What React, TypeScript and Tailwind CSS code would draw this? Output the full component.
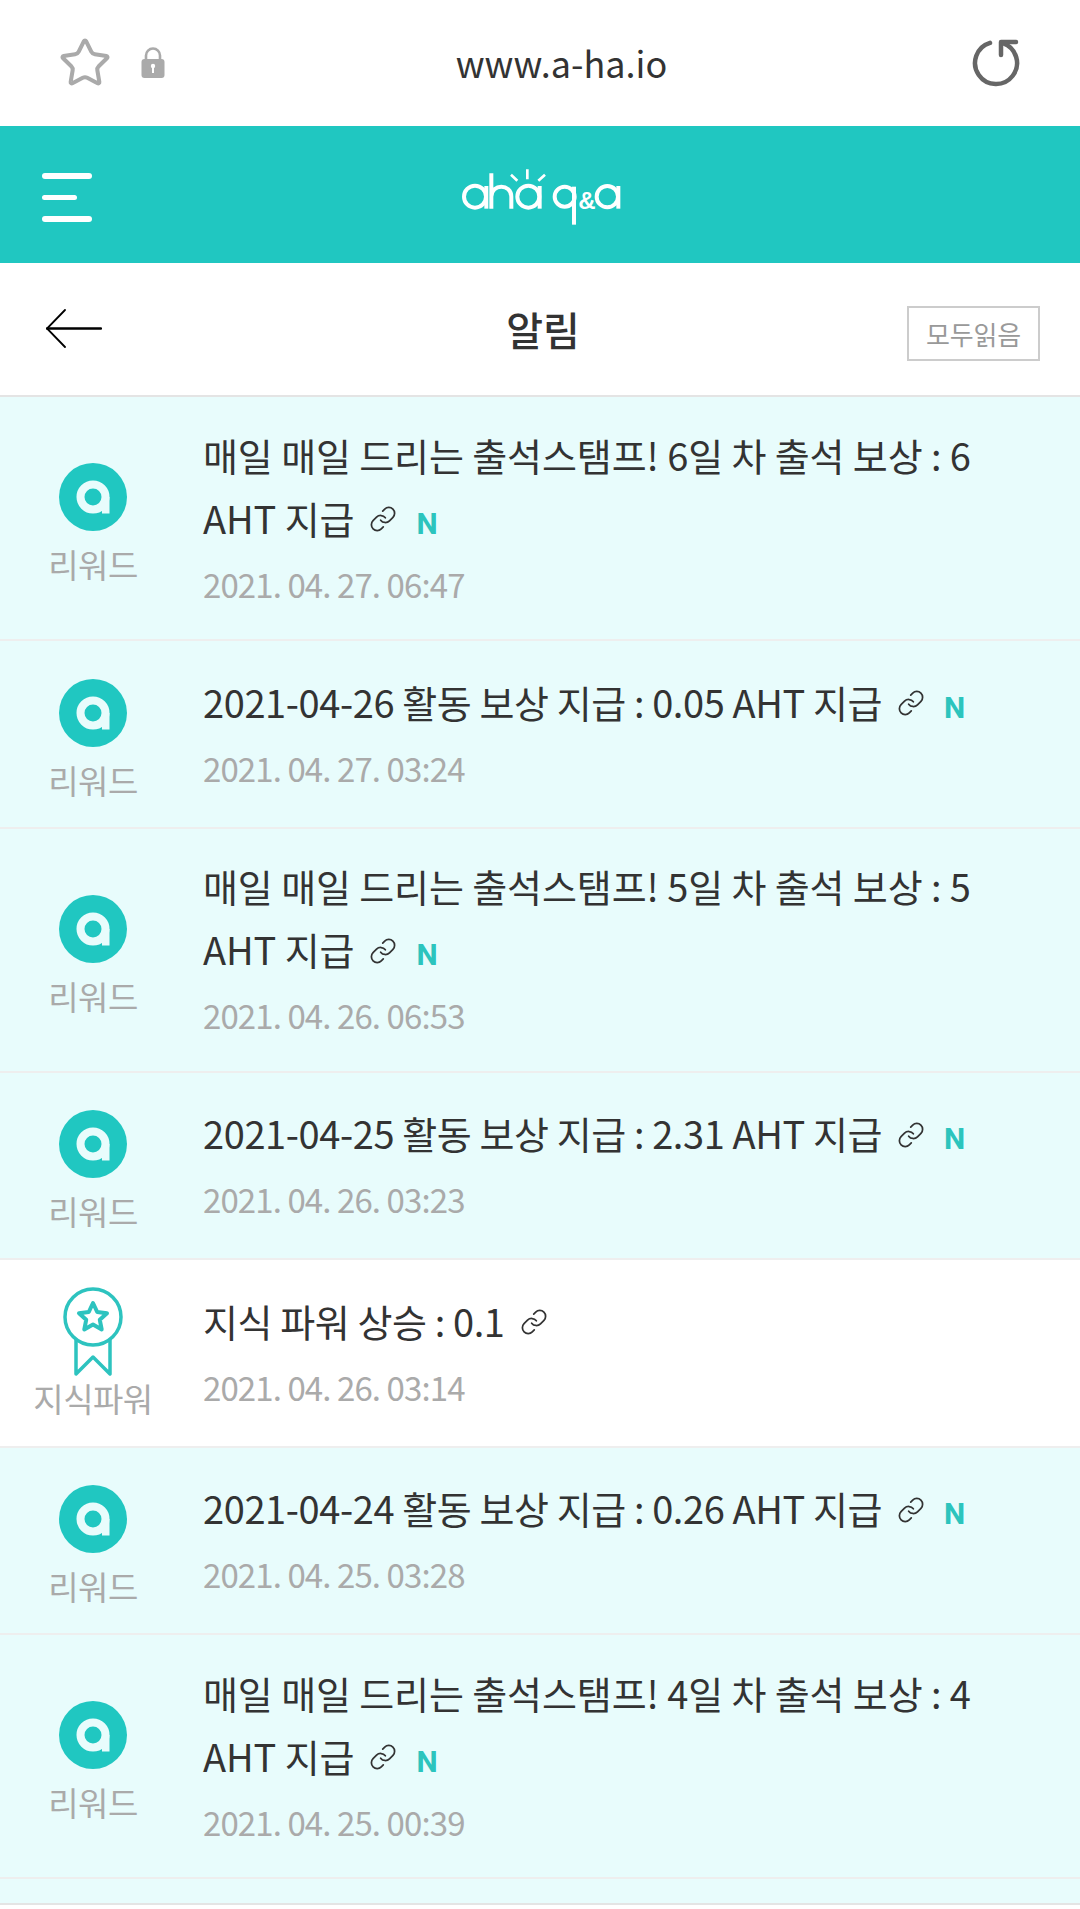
import { Link, Star } from 'lucide-react'

interface Notice {
  title: string
  tail?: string
  date: string
  unread: boolean
  kind: 'reward' | 'power'
}

const notices: Notice[] = [
  { title: '매일 매일 드리는 출석스탬프! 6일 차 출석 보상 : 6', tail: 'AHT 지급', date: '2021. 04. 27. 06:47', unread: true, kind: 'reward' },
  { title: '2021-04-26 활동 보상 지급 : 0.05 AHT 지급', date: '2021. 04. 27. 03:24', unread: true, kind: 'reward' },
  { title: '매일 매일 드리는 출석스탬프! 5일 차 출석 보상 : 5', tail: 'AHT 지급', date: '2021. 04. 26. 06:53', unread: true, kind: 'reward' },
  { title: '2021-04-25 활동 보상 지급 : 2.31 AHT 지급', date: '2021. 04. 26. 03:23', unread: true, kind: 'reward' },
  { title: '지식 파워 상승 : 0.1', date: '2021. 04. 26. 03:14', unread: false, kind: 'power' },
  { title: '2021-04-24 활동 보상 지급 : 0.26 AHT 지급', date: '2021. 04. 25. 03:28', unread: true, kind: 'reward' },
  { title: '매일 매일 드리는 출석스탬프! 4일 차 출석 보상 : 4', tail: 'AHT 지급', date: '2021. 04. 25. 00:39', unread: true, kind: 'reward' },
]

function RewardIcon() {
  return (
    <svg width="68" height="68" viewBox="0 0 68 68">
      <circle cx="34" cy="34" r="34" fill="#20c7c1" />
      <circle cx="34" cy="34" r="12.5" fill="none" stroke="#e8fcfc" strokeWidth="8" />
      <rect x="43" y="34" width="7.5" height="16.5" fill="#e8fcfc" />
    </svg>
  )
}

function PowerIcon() {
  return (
    <svg width="62" height="90" viewBox="0 0 62 90" fill="none" stroke="#2dc3bf" strokeWidth="3.5" strokeLinejoin="round" strokeLinecap="round">
      <circle cx="31" cy="30" r="28" />
      <path d="M14 53 V87 L31 70 L48 87 V53" />
      <path d="M31 16 L35.2 25 L45 26.2 L37.8 32.8 L39.7 42.5 L31 37.6 L22.3 42.5 L24.2 32.8 L17 26.2 L26.8 25 Z" strokeWidth="4" />
    </svg>
  )
}

function Logo() {
  return (
    <svg width="260" height="90" viewBox="0 0 780 270" fill="none" stroke="#ffffff" strokeWidth="12">
      <circle cx="225" cy="140" r="33" />
      <path d="M259 108 V176" />
      <path d="M274 70 V176 M274 140 C274 100 334 100 334 140 V176" />
      <circle cx="385" cy="140" r="33" />
      <path d="M419 108 V176" />
      <path d="M382 58 V88 M333 74 L352 92 M435 74 L415 92" strokeWidth="8" />
      <circle cx="494" cy="140" r="30" />
      <path d="M522 110 V224" />
      <text x="535" y="176" fontSize="72" fontWeight="700" fill="#ffffff" stroke="none" fontFamily="'Liberation Sans', sans-serif">&amp;</text>
      <circle cx="622" cy="140" r="32" />
      <path d="M655 108 V176" />
    </svg>
  )
}

function NoticeRow({ notice }: { notice: Notice }) {
  const titleClass = `text-[38px] leading-[63px] text-[#333333] whitespace-nowrap ${notice.tail ? 'tracking-[-0.1px]' : 'tracking-[-0.4px]'}`
  const marks = (
    <>
      <Link size={28} strokeWidth={1.5} className="inline-block ml-[15px] mb-[8px] text-[#333333]" />
      {notice.unread && (
        <span className="ml-[19px] text-[30px] leading-none font-bold text-[#2cc4bd]" style={{ fontFamily: 'Roboto, sans-serif' }}>N</span>
      )}
    </>
  )

  return (
    <div className={`flex items-center border-b-2 border-[#eeeeee] ${notice.tail ? 'h-[244px]' : 'h-[187.5px]'} ${notice.unread ? 'bg-[#e8fcfc]' : 'bg-white'}`}>
      {notice.kind === 'reward' ? (
        <div className="w-[186px] shrink-0 flex flex-col items-center pt-[13px]">
          <RewardIcon />
          <span className="mt-[11px] text-[33px] leading-[44px] tracking-[-0.5px] text-[#aaaaaa] whitespace-nowrap">리워드</span>
        </div>
      ) : (
        <div className="w-[186px] shrink-0 flex flex-col items-center pt-[1px]">
          <PowerIcon />
          <span className="-mt-[1px] text-[33px] leading-[44px] tracking-[-0.5px] text-[#aaaaaa] whitespace-nowrap">지식파워</span>
        </div>
      )}
      <div className="ml-[17px] flex-1 pt-[3px]">
        <p className={titleClass}>
          {notice.title}
          {!notice.tail && marks}
        </p>
        {notice.tail && (
          <p className={titleClass}>
            {notice.tail}
            {marks}
          </p>
        )}
        <p className="pt-[3px] text-[33px] leading-[65px] tracking-[-0.9px] text-[#aaaaaa]">{notice.date}</p>
      </div>
    </div>
  )
}

export default function App() {
  return (
    <div className="w-[1080px] h-[1909px] overflow-hidden bg-white" style={{ fontFamily: '"Noto Sans CJK KR", "Noto Sans", sans-serif' }}>
      {/* browser bar */}
      <div className="h-[126px] flex items-center justify-between pl-[58px] pr-[59px]">
        <div className="flex items-center gap-[29px] w-[120px]">
          <Star size={54} strokeWidth={1.8} className="text-[#aaaaaa] shrink-0" />
          <svg width="24" height="32" viewBox="0 0 24 32" className="shrink-0">
            <path d="M5 14 V8.5 a7 7 0 0 1 14 0 V14" fill="none" stroke="#aaaaaa" strokeWidth="2.6" />
            <rect x="0.5" y="12" width="23" height="19" rx="3" fill="#aaaaaa" />
            <circle cx="12" cy="19" r="2.2" fill="#ffffff" />
            <rect x="11" y="19" width="2" height="7" fill="#ffffff" />
          </svg>
        </div>
        <span className="text-[36px] text-[#333333] -mt-[2px]">www.a-ha.io</span>
        <div className="w-[76px] flex justify-end">
          <svg width="50" height="50" viewBox="0 0 50 50" fill="none" stroke="#666666" strokeWidth="4.5" strokeLinecap="round" strokeLinejoin="round">
            <path d="M32 5.2 A21 21 0 1 1 19 4.9" />
            <path d="M45 4 H30 V17" />
          </svg>
        </div>
      </div>

      {/* teal header */}
      <div className="h-[137px] bg-[#20c7c1] flex items-center relative">
        <div className="ml-[42px] mt-[5px] flex flex-col gap-[16px] w-[50px]">
          <div className="h-[6px] w-[50px] rounded-full bg-white" />
          <div className="h-[5px] w-[35px] rounded-full bg-white" />
          <div className="h-[6px] w-[50px] rounded-full bg-white" />
        </div>
        <div className="absolute left-[400px] top-[24px]">
          <Logo />
        </div>
      </div>

      {/* title */}
      <div className="h-[134px] grid grid-cols-[1fr_auto_1fr] items-center border-b-2 border-[#e4e4e4] pl-[46px] pr-[40px]">
        <svg width="56" height="40" viewBox="0 0 56 40" fill="none" stroke="#000000" strokeLinecap="round">
          <path d="M55 19.5 H1" strokeWidth="2.5" />
          <path d="M19 1 L1 19.5 L19 38" strokeWidth="1.8" />
        </svg>
        <span className="text-[40px] font-medium text-[#333333]">알림</span>
        <button className="justify-self-end mt-[9px] w-[133px] h-[55px] border-2 border-[#cccccc] text-[26px] tracking-[-0.2px] text-[#999999]">모두읽음</button>
      </div>

      {notices.map((notice, i) => (
        <NoticeRow key={i} notice={notice} />
      ))}
      <div className="h-[26px] bg-[#e8fcfc] border-b-2 border-[#e4e4e4]" />
    </div>
  )
}
